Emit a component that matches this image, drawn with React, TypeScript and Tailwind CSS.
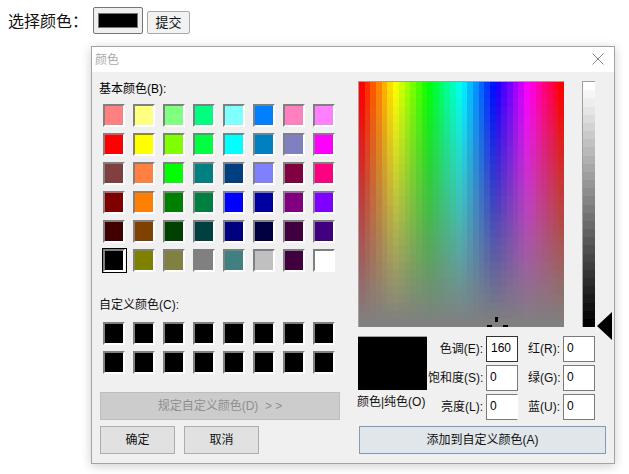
import React from "react";

const basic = [
  "#ff8080","#ffff80","#80ff80","#00ff80","#80ffff","#0080ff","#ff80c0","#ff80ff",
  "#ff0000","#ffff00","#80ff00","#00ff40","#00ffff","#0080c0","#8080c0","#ff00ff",
  "#804040","#ff8040","#00ff00","#008080","#004080","#8080ff","#800040","#ff0080",
  "#800000","#ff8000","#008000","#008040","#0000ff","#0000a0","#800080","#8000ff",
  "#400000","#804000","#004000","#004040","#000080","#000040","#400040","#400080",
  "#000000","#808000","#808040","#808080","#408080","#c0c0c0","#400040","#ffffff",
];

const font = "[font-family:'Liberation_Sans','Noto_Sans_CJK_SC',sans-serif]";

function Swatch({ color, selected }: { color: string; selected?: boolean }) {
  return (
    <div className={selected ? "relative w-[22px] h-[23px]" : "w-[22px] h-[23px]"}>
      <div
        className="w-full h-full border-2 border-t-[#808080] border-l-[#808080] border-r-[#ffffff] border-b-[#ffffff]"
        style={{ backgroundColor: color }}
      />
      {selected && (
        <div className="absolute -left-[1px] -top-[1px] -right-[2px] -bottom-[1px] border border-black" />
      )}
    </div>
  );
}

function Spectrum() {
  const cols = 36;
  const rows = 30;
  const cells: React.ReactNode[] = [];
  for (let r = 0; r < rows; r++) {
    for (let c = 0; c < cols; c++) {
      const h = (c / (cols - 1)) * 360;
      const s = 100 - (r / (rows - 1)) * 100;
      cells.push(
        <rect
          key={`${r}-${c}`}
          x={(c * 205) / cols}
          y={(r * 245) / rows}
          width={205 / cols + 0.5}
          height={245 / rows + 0.5}
          fill={`hsl(${h} ${s}% 50%)`}
        />
      );
    }
  }
  return (
    <div className="relative w-[206px] h-[246px] border-t border-l border-[#a0a0a0] bg-[#808080]">
      <svg width="205" height="245" viewBox="0 0 205 245" className="block" shapeRendering="crispEdges">
        {cells}
        <rect x="136" y="235" width="3" height="5" fill="#000" />
        <rect x="128" y="243" width="5" height="2" fill="#000" />
        <rect x="144" y="243" width="5" height="2" fill="#000" />
      </svg>
    </div>
  );
}

function LumBar() {
  const n = 30;
  return (
    <div className="w-[13px] h-[246px] border-t border-l border-[#a0a0a0] bg-white">
      <svg width="12" height="245" viewBox="0 0 12 245" className="block" shapeRendering="crispEdges">
        {Array.from({ length: n }).map((_, i) => {
          const v = Math.round(255 - (i / (n - 1)) * 255);
          return (
            <rect
              key={i}
              x="0"
              y={(i * 245) / n}
              width="12"
              height={245 / n + 0.5}
              fill={`rgb(${v},${v},${v})`}
            />
          );
        })}
      </svg>
    </div>
  );
}

function Field({
  label,
  value,
  labelWidth,
  active,
  openRight,
}: {
  label: string;
  value: string;
  labelWidth: string;
  active?: boolean;
  openRight?: boolean;
}) {
  let box = "w-[32px] h-[26px] border border-[#7a7a7a] bg-white text-[12px] leading-[22px] text-black pl-[3px]";
  if (active) box = "w-[32px] h-[26px] border border-[#333333] bg-white text-[12px] leading-[22px] text-black pl-[4px]";
  if (openRight) box = "w-[32px] h-[26px] border border-[#7a7a7a] border-r-white bg-white text-[12px] leading-[22px] text-black pl-[3px]";
  return (
    <div className="flex items-center">
      <span className={`${labelWidth} text-right text-[12px] leading-[16px] text-[#111] whitespace-nowrap mr-[3px]`}>
        {label}
      </span>
      <div className={box}>{value}</div>
    </div>
  );
}

export default function App() {
  return (
    <div className={`relative w-[629px] h-[474px] bg-white overflow-hidden ${font}`}>
      <div className="flex items-start pl-[8px] pt-[7px]">
        <span className="text-[16px] leading-[22px] text-[#111] mt-[4px] w-[85px]">选择颜色：</span>
        <div className="w-[50px] h-[27px] border border-[#767676] rounded-[2px] bg-[#efefef] flex items-center justify-center">
          <div className="w-[40px] h-[15px] bg-black border border-[#767676]" />
        </div>
        <button className="ml-[4px] mt-[4px] w-[43px] h-[23px] border border-[#a8a8a8] rounded-[2px] bg-[#f2f2f2] text-[13px] leading-[20px] text-[#111]">
          提交
        </button>
      </div>

      <div className="absolute left-[91px] top-[46px] w-[524px] h-[418px] border border-[#a3a3a3] bg-[#f0f0f0] shadow-[0_2px_10px_rgba(0,0,0,0.2)] flex flex-col">
        <div className="h-[25px] bg-white flex items-center justify-between pl-[3px] pr-[10px] shrink-0">
          <span className="text-[12px] leading-[16px] text-[#aaaaaa]">颜色</span>
          <svg width="12" height="12" viewBox="0 0 12 12" className="block mb-[1px]">
            <path d="M0.5 0.5 L11.5 11.5 M11.5 0.5 L0.5 11.5" stroke="#8a8a8a" strokeWidth="1" fill="none" />
          </svg>
        </div>

        <div className="flex flex-1 pl-[7px] pt-[9px]">
          <div className="w-[259px] flex flex-col shrink-0">
            <div className="text-[12px] leading-[16px] text-black h-[16px]">基本颜色(B):</div>
            <div className="grid grid-cols-[repeat(8,30px)] auto-rows-[29px] ml-[4px] mt-[7px]">
              {basic.map((c, i) => (
                <Swatch key={i} color={c} selected={i === 40} />
              ))}
            </div>
            <div className="text-[12px] leading-[16px] text-[#111] mt-[19px]">自定义颜色(C):</div>
            <div className="grid grid-cols-[repeat(8,30px)] auto-rows-[29px] ml-[4px] mt-[9px]">
              {Array.from({ length: 16 }).map((_, i) => (
                <Swatch key={i} color="#000000" />
              ))}
            </div>
            <div className="ml-[1px] mt-[12px] w-[240px] h-[28px] border border-[#bdbdbd] bg-[#cccccc] flex items-center justify-center text-[12px] text-[#8f8f8f]">
              规定自定义颜色(D)&nbsp;&nbsp;&gt; &gt;
            </div>
            <div className="flex gap-[9px] ml-[1px] mt-[6px]">
              <div className="w-[75px] h-[28px] border border-[#adadad] bg-[#e1e1e1] flex items-center justify-center text-[12px] text-[#111]">
                确定
              </div>
              <div className="w-[75px] h-[28px] border border-[#adadad] bg-[#e1e1e1] flex items-center justify-center text-[12px] text-[#111]">
                取消
              </div>
            </div>
          </div>

          <div className="w-[248px] flex flex-col shrink-0">
            <div className="flex items-start h-[246px]">
              <Spectrum />
              <div className="ml-[18px]">
                <LumBar />
              </div>
              <svg width="15" height="28" viewBox="0 0 15 28" className="block ml-[2px] mt-[231px] shrink-0 overflow-visible">
                <path d="M0 14 L15 0 V28 Z" fill="#000" />
              </svg>
            </div>
            <div className="flex mt-[9px]">
              <div className="w-[70px] shrink-0">
                <div className="w-[69px] h-[54px] bg-black border-t border-[#a0a0a0]" />
                <div className="text-[12px] leading-[16px] text-[#111] mt-[4px] -ml-[1px] whitespace-nowrap">颜色|纯色(O)</div>
              </div>
              <div className="flex flex-col gap-[3px] w-[90px]">
                <Field label="色调(E):" value="160" labelWidth="w-[55px]" active />
                <Field label="饱和度(S):" value="0" labelWidth="w-[55px]" />
                <Field label="亮度(L):" value="0" labelWidth="w-[55px]" openRight />
              </div>
              <div className="flex flex-col gap-[3px] ml-[10px]">
                <Field label="红(R):" value="0" labelWidth="w-[32px]" />
                <Field label="绿(G):" value="0" labelWidth="w-[32px]" />
                <Field label="蓝(U):" value="0" labelWidth="w-[32px]" />
              </div>
            </div>
            <div className="ml-[1px] mt-[6px] w-[247px] h-[28px] border border-[#7f9db9] bg-[#e1e6ea] flex items-center justify-center text-[12px] text-[#111]">
              添加到自定义颜色(A)
            </div>
          </div>
        </div>
      </div>
    </div>
  );
}
